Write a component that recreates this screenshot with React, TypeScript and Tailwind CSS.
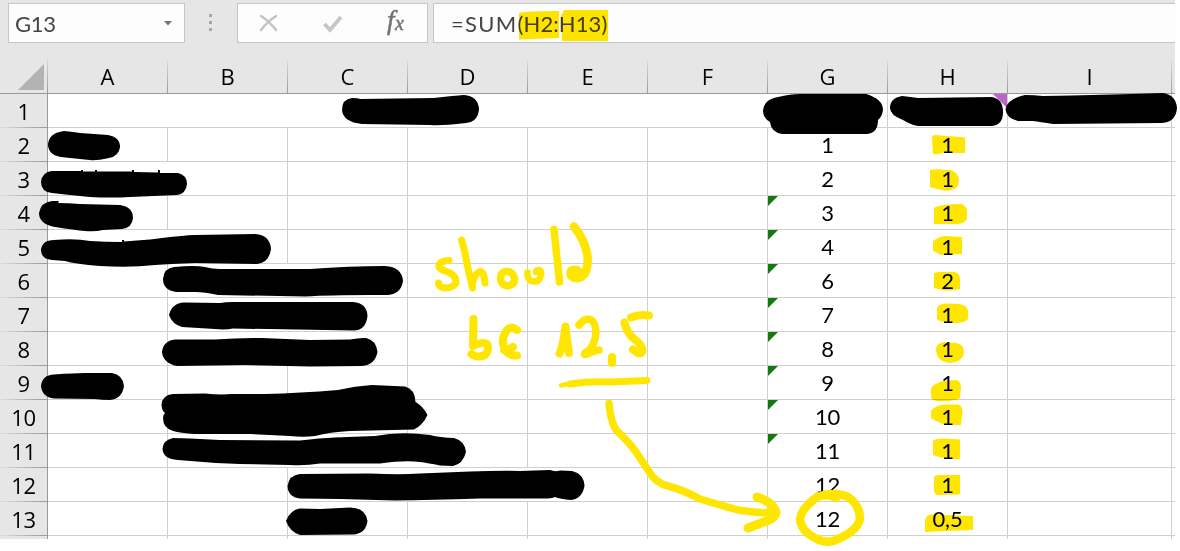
const COLUMNS = ['A', 'B', 'C', 'D', 'E', 'F', 'G', 'H', 'I'];

const ROWS = [
    { g: '', h: '', noBorder: 'ABCDEF' },
    { g: '1', h: '1', noBorder: '' },
    { g: '2', h: '1', noBorder: 'A' },
    { g: '3', h: '1', noBorder: '', warn: true },
    { g: '4', h: '1', noBorder: 'A', warn: true },
    { g: '6', h: '2', noBorder: 'B', warn: true },
    { g: '7', h: '1', noBorder: 'B', warn: true },
    { g: '8', h: '1', noBorder: 'B', warn: true },
    { g: '9', h: '1', noBorder: '', warn: true },
    { g: '10', h: '1', noBorder: 'B', warn: true },
    { g: '11', h: '1', noBorder: 'BC', warn: true },
    { g: '12', h: '1', noBorder: 'CD' },
    { g: '12', h: '0,5', noBorder: '' },
];

const REDACTIONS = [
    'M342 110Q342 99 352 98Q358 98 360 99L434 98Q450 96 464 95Q478 96 479 109Q478 122 466 123Q440 126 430 125L362 124Q343 122 342 110Z',
    'M763 111Q764 99 778 97Q790 94 800 94L866 94Q883 99 883 110Q882 117 878 120Q878 133 867 134L782 134Q771 132 770 122Q763 118 763 111Z',
    'M890 108Q890 98 902 96Q911 97 918 98L992 97Q1003 99 1003 112Q1003 125 992 126L918 126Q911 125 903 120Q890 115 890 108Z',
    'M1005.500 109Q1007 99 1025 95Q1034 95 1043 96Q1100 95 1163 93Q1176 95 1177 108Q1176 122 1162 123L1053 124Q1040 122 1033 121L1018 121Q1006 118 1005.500 109Z',
    'M48 144Q49 133 64 131Q74 132 80 133L108 135Q120 137 120 147Q119 156 109 158Q95 161 90 160Q80 159 61 157Q48 155 48 144Z',
    'M41 182Q42 172 52 171L81 171V170H83V171.500H95V170H97V171.500L132 171.500V170H134V172L158 172.500V170H160V173L178 173Q187 175 187 184Q186 194 177 195L130 197Q110 198 90 197L70 195L52 193Q41 192 41 182Z',
    'M39 213Q41 202 52 201L59 201L58 203Q68 203 80 204L120 205Q133 207 133 218Q132 228 122 229L103 230Q95 232 85 231Q75 230 55 227Q39 224 39 213Z',
    'M41 250Q42 240 54 240Q75 238 90 241Q105 242 122 242V240H124V241.500L150 239.500Q185 235 195 235L255 234Q270 235 271 249Q269 263 257 264L195 263Q170 264 155 265Q130 268 100 266Q75 264 65 261L52 260Q41 259 41 250Z',
    'M163 279Q164 268 174 267Q195 265 205 267Q212 269 220 269L310 269Q350 266 385 266Q402 267 403 281Q401 294 388 295L370 295Q330 295 305 296.500L218 295Q205 292 195 292L176 292Q163 290 163 279Z',
    'M169 315Q172 303 184 302.500L220 303Q226 301.500 240 302L353 302Q367 303 367.500 316Q366 330 354 330.500L233 328.500Q225 330 215 329L182 327Q172 324 169 315Z',
    'M162 352Q163 341 175 339.500L215 339.500Q240 337.500 262 338L310 340L350 339.500Q360 337.500 366 338Q376 340 377.500 352Q375 365 362 366L310 366.500L245 365L177 366Q163 363 162 352Z',
    'M41 386Q42 375 54 374.500Q75 373 85 373L112 373Q123 375 124 386Q122 399 110 400Q102 400 95 399L54 398.500Q42 397 41 386Z',
    'M161.500 405Q162 395 173 394L205 393.500Q220 395 232 394L265 394Q300 393 338 390Q355 386 372 385L405 386.500Q415 389 415.500 402Q423 406 427.500 415Q423 425 414 429.500L350 431Q330 432 315 436Q303 437.500 290 436L250 434L195 434Q180 433 173 431Q163 428 163 418Q163 415 165 413Q162 411 161.500 405Z',
    'M162.500 449Q163 440 173 438L190 438.500L220 440L300 440.500Q320 438 335 437.500L375 436Q400 431 430 435Q440 437.500 454 438Q465 441 466 452Q463 464 453 466L440 465.500Q428 463 420 462Q405 460 380 463.500L320 463.500Q305 466 290 465L240 464Q210 463 178 460Q163 459 162.500 449Z',
    'M287.500 486Q289 475 300 474L370 473.500Q400 475 420 473.500L470 471.500Q500 470.500 520 471L550 470Q555 472 560 470.500L572 471Q584 474 584.500 486Q582 499 571 500Q560 499 555 497Q550 499 540 498.500L480 498.500Q430 500 395 500.500L340 499L300 498.500Q288 497 287.500 486Z',
    'M286 521Q290 510 300 508.500L320 509L350 507.500Q366 508 367.500 521Q366 533 354 534.500L300 535Q290 532 286 521Z',
];

const HIGHLIGHTS = [
    'M519 13Q525 11 559 11L559 38L519 39.500Z',
    'M564 10L608 10L608 41L562 41L561 16Z',
    'M932 137Q932 135 936 135L965 137.500L965 153L944 153Q938 154.500 933 154Z',
    'M930 170Q937 168.500 946 170L951 170Q958 173 959 179Q959 187 954 189L948 191Q940 190 930 187Z',
    'M934 208Q940 204 962 204Q967 207 967 211V219Q964 224 957 224L934 224Z',
    'M933 241Q940 236 946 236L962 237L962 254L941 255Q936 252 933 251Z',
    'M934 273Q938 271 955 272Q960 274 960 278L960 289Q950 292 942 290L934 288Z',
    'M937 308Q938 304 946 303.500L960 304Q968 306 968 311L968 319Q965 323 955 323L945 322Q937 321 937 318Z',
    'M936 350Q936 343 944 342L956 343Q964 344 964 352Q963 362 950 363Q937 362 936 350Z',
    'M931 388Q935 383 943 381L957 380Q961 382 961 387L960 398Q957 400.500 945 401Q931 402 931 397Z',
    'M931 411Q935 405 946 404.500L958 404.500Q962.500 406 962.500 412L961 425L945 425Q935 421 931 418Z',
    'M933 441Q935 438 945 438.500L960 439.500L960 459L948 459Q938 457 933 455Z',
    'M934 478Q934 475 940 475L960 475L960 494.500L938 495Q934 494 934 491Z',
    'M925 520Q926 514 935 514L945 515L973 516L973 530L945 531L925 532Z',
];

// freehand pen strokes: note, underline, arrow and circle
const PEN = [
    { w: 7, d: 'M449 260.500Q438 261 439 267Q441 270 448 272Q457 276 456 283Q453 288 445 288Q438.500 287 438.500 283' },
    { w: 7, d: 'M461.500 240Q465 250 467 264L472.500 288' },
    { w: 7, d: 'M472 285Q475 273 480 271.500Q484 271 485 283' },
    { w: 7.5, d: 'M506 271.500Q500.500 272 500.500 279Q502 286 508 286Q515 285 514.500 278Q512 271 506 271.500Z' },
    { w: 6.5, d: 'M527.500 272.500Q527 279 531 281Q537 283 540 278Q543 271 539 270Q536 270 536 272' },
    { w: 7.5, d: 'M554 229.500L559.500 282' },
    { w: 8.5, d: 'M574 226.500Q585 240 587.500 256Q588.500 272 582 276.500Q576 280 571 276Q569 270 574 270Q578 269 579 273' },
    { w: 8, d: 'M473.500 319L473 346Q483 341 487 344Q490 350 485 355Q477 358.500 471.500 354' },
    { w: 8, d: 'M517 330Q511 325.500 507 330Q500.500 339 504 347Q507 356 517 355.500M504 350Q509 350 513 347' },
    { w: 8, d: 'M559.500 353.500Q563 347 565.500 326.500Q567 342 569 353M563 347L567 348M564 340L566.500 345' },
    { w: 7.500, d: 'M579 325Q586 316.500 592 320.500Q598 327 595 339Q592 350 584.500 353.500Q584 356 592 352Q597 350 599 350' },
    { w: 8, d: 'M612 357V363' },
    { w: 8, d: 'M649 315.500Q639 314 631 317.500' },
    { w: 8, d: 'M624.500 322.500Q626 331 633 338Q643 345 642.500 351Q641 355 637 352.500L633 349.500' },
    { w: 4.5, d: 'M561 385.500Q578 381 598 382.500' },
    { w: 7, d: 'M570 384Q590 381 610 382L647 380.500' },
    { w: 7.5, d: 'M609 403.500Q611 424 617 431Q631 444 638 455L650 473Q656 483 668 486Q681 489 700 499Q720 505 738 510Q755 513 774 513' },
    { w: 9, d: 'M757 497Q773 502 776 512Q776 518 764 522L748 528' },
    { w: 6, d: 'M768 511L772 516' },
    { w: 8.5, d: 'M836 498Q828 493 817 497Q801 509 800 519Q801 531 815 538Q828 545 838 539Q857 531 860 519Q860 505 848 497Q839 492 824 495' },
];

function Cell({ col, row }: { col: string; row: (typeof ROWS)[number] }) {
    const width = col === 'I' ? 'w-[164px]' : 'w-[120px]';
    const border = row.noBorder.includes(col) ? 'border-r-transparent' : 'border-r-[#cfcfcf]';

    return (
        <div
            className={`relative flex shrink-0 items-center justify-center border-r pt-px font-['Lato',sans-serif] text-[22px] leading-none tracking-[-0.2px] text-black ${width} ${border}`}
        >
            {col === 'G' && row.g}
            {col === 'H' && row.h}
            {col === 'G' && row.warn && (
                <span className="absolute top-0 left-0 size-2.5 bg-[#107c10] [clip-path:polygon(0_0,100%_0,0_100%)]" />
            )}
            {col === 'H' && !row.h && (
                <span className="absolute top-0 right-0 h-3.5 w-3.5 bg-[#b967c7] [clip-path:polygon(0_0,100%_0,100%_100%)]" />
            )}
        </div>
    );
}

function FormulaBar() {
    return (
        <div className="flex h-[60px] items-start pt-[3px] pl-2 font-['Lato',sans-serif] text-[22px] leading-none text-[#444]">
            <div className="flex h-10 w-[177px] items-center justify-between border border-[#c6c6c6] bg-[#fdfdfd] pt-px pr-3 pl-[6px]">
                <span className="tracking-[-0.3px]">G13</span>
                <svg className="h-[5px] w-2" viewBox="0 0 8 5">
                    <path d="M0 0h8L4 4.500z" fill="#777" />
                </svg>
            </div>
            <div className="mt-[11px] ml-6 flex flex-col gap-1">
                <span className="size-[3px] bg-[#a6a6a6]" />
                <span className="size-[3px] bg-[#a6a6a6]" />
                <span className="size-[3px] bg-[#a6a6a6]" />
            </div>
            <div className="ml-[25px] flex h-10 w-[191px] border border-[#c6c6c6] bg-[#fdfdfd]">
                <svg className="h-full w-full" viewBox="0 0 189 38" fill="none">
                    <path d="M23 12Q31 17 38 26M38 12Q30 17 23 26" stroke="#c3c3c3" strokeWidth="2.500" strokeLinecap="round" />
                    <path d="M86.500 20L92 26L103 13" stroke="#c6c6c6" strokeWidth="3.800" />
                    <g fontStyle="italic" fontFamily="Liberation Serif, serif" fill="#737373" stroke="#737373" strokeWidth="0.500">
                        <text x="149" y="25" fontSize="27">
                            f
                        </text>
                        <text x="157" y="26" fontSize="20">
                            x
                        </text>
                    </g>
                </svg>
            </div>
            <div className="ml-[5px] flex h-10 grow items-center border border-r-0 border-[#c6c6c6] bg-[#fdfdfd] pt-px pl-[17px]">
                <span className="tracking-[1.3px]">=SUM</span>
                <span className="tracking-[0.1px]">(H2:H13)</span>
            </div>
        </div>
    );
}

export default function App() {
    return (
        <div className="relative h-[551px] w-[1180px] overflow-hidden bg-white">
            <div className="h-[539px] w-[1175px] overflow-hidden">
                <div className="bg-[#e6e6e6]">
                    <FormulaBar />
                    <div className="flex h-[34px] border-b border-[#999] font-['Open_Sans',sans-serif] text-[22px] leading-none text-black">
                        <div className="flex w-12 shrink-0 items-end justify-end border-r [border-image:linear-gradient(#d8d8d8,#999)_1] pr-[3px] pb-[3px]">
                            <span className="size-[26px] bg-[#b3b3b3] [clip-path:polygon(100%_0,100%_100%,0_100%)]" />
                        </div>
                        {COLUMNS.map((col) => (
                            <div
                                key={col}
                                className={`flex shrink-0 items-center justify-center border-r [border-image:linear-gradient(#dcdcdc,#999)_1] pb-px ${col === 'I' ? 'w-[164px]' : 'w-[120px]'}`}
                            >
                                {col}
                            </div>
                        ))}
                    </div>
                </div>

                {ROWS.map((row, i) => (
                    <div key={i} className="flex h-[34px]">
                        <div className="flex w-12 shrink-0 flex-col border-r border-[#999] bg-[#e6e6e6]">
                            <span className="flex grow items-center justify-center pt-px font-['Open_Sans',sans-serif] text-[22px] leading-none tracking-[-0.4px] text-black">
                                {i + 1}
                            </span>
                            <span className="h-px bg-linear-to-r from-[#dcdcdc] to-[#999]" />
                        </div>
                        <div className="flex grow border-b border-[#cfcfcf]">
                            {COLUMNS.map((col) => (
                                <Cell key={col} col={col} row={row} />
                            ))}
                        </div>
                    </div>
                ))}

                <div className="flex h-[3px]">
                    <div className="w-12 shrink-0 border-r border-[#999] bg-[#e6e6e6]" />
                    {COLUMNS.map((col) => (
                        <div
                            key={col}
                            className={`shrink-0 border-r border-[#cfcfcf] ${col === 'I' ? 'w-[164px]' : 'w-[120px]'}`}
                        />
                    ))}
                </div>
            </div>

            <svg className="absolute inset-0 mix-blend-multiply" width="1180" height="551" fill="#ffe600">
                {HIGHLIGHTS.map((d) => (
                    <path key={d} d={d} />
                ))}
            </svg>
            <svg className="absolute inset-0" width="1180" height="551">
                {REDACTIONS.map((d) => (
                    <path key={d} d={d} />
                ))}
                <g fill="none" stroke="#ffe600" strokeLinecap="round" strokeLinejoin="round">
                    {PEN.map(({ w, d }) => (
                        <path key={d} d={d} strokeWidth={w} />
                    ))}
                </g>
            </svg>
        </div>
    );
}
